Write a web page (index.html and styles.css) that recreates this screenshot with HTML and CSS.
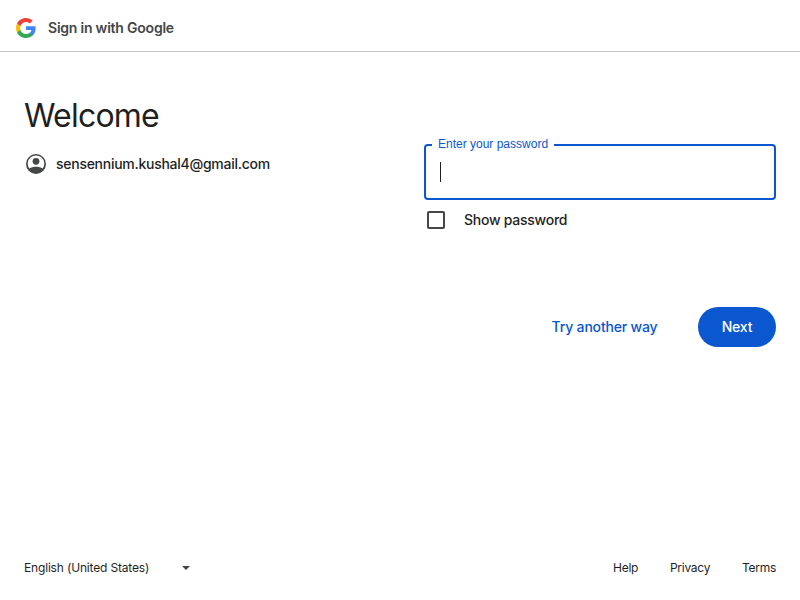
FILE: index.html
```html
<!DOCTYPE html>
<html lang="en">
<head>
<meta charset="utf-8">
<title>Sign in with Google</title>
<link rel="stylesheet" href="styles.css">
</head>
<body>
<div class="page">
  <header class="header">
    <svg class="logo" viewBox="2 2 44 44"><path fill="#4285F4" d="M45.12 24.5c0-1.56-.14-3.06-.4-4.5H24v8.51h11.84c-.51 2.75-2.06 5.08-4.39 6.64v5.52h7.11c4.16-3.83 6.56-9.47 6.56-16.17z"/><path fill="#34A853" d="M24 46c5.94 0 10.92-1.97 14.56-5.33l-7.11-5.52c-1.97 1.32-4.49 2.1-7.45 2.1-5.73 0-10.58-3.87-12.31-9.07H4.34v5.7C7.96 41.07 15.4 46 24 46z"/><path fill="#FBBC05" d="M11.69 28.18C11.25 26.86 11 25.45 11 24s.25-2.86.69-4.18v-5.7H4.34C2.85 17.09 2 20.45 2 24s.85 6.91 2.34 9.88l7.35-5.7z"/><path fill="#EA4335" d="M24 10.75c3.23 0 6.13 1.11 8.41 3.29l6.31-6.31C34.91 4.18 29.93 2 24 2 15.4 2 7.96 6.93 4.34 14.12l7.35 5.7c1.73-5.2 6.58-9.07 12.31-9.07z"/></svg>
    <span class="brand">Sign in with Google</span>
  </header>
  <main class="main">
    <section class="intro">
      <h1 class="title">Welcome</h1>
      <div class="account">
        <svg class="avatar" viewBox="0 0 24 24"><path fill="#444746" fill-rule="evenodd" d="M12 2a10 10 0 1 0 0 20 10 10 0 0 0 0-20zM5.3 16.6A8.3 8.3 0 1 1 18.7 16.6C16.9 15.4 14.5 14.8 12 14.8s-4.9.6-6.7 1.8z"/><circle fill="#444746" cx="12" cy="9.3" r="3.4"/></svg>
        <span class="email">sensennium.kushal4@gmail.com</span>
      </div>
    </section>
    <section class="form">
      <div class="field"><span class="label">Enter your password</span><span class="caret"></span></div>
      <div class="show"><span class="checkbox"></span><span class="show-text">Show password</span></div>
      <div class="actions"><span class="other">Try another way</span><span class="next">Next</span></div>
    </section>
  </main>
  <footer class="footer">
    <span class="language">English (United States)</span>
    <svg class="arrow" viewBox="0 0 8 4"><path fill="#444746" d="M0 0h8L4 4z"/></svg>
    <nav class="links"><span class="help">Help</span><span class="privacy">Privacy</span><span class="terms">Terms</span></nav>
  </footer>
</div>
</body>
</html>
```
FILE: styles.css
```css
* { box-sizing: border-box; }
body { margin: 0; background: #fff; color: #1f1f1f; font-family: Inter, sans-serif; }
.page { height: 600px; display: flex; flex-direction: column; }
.header { height: 52px; padding: 4px 16px 0; display: flex; align-items: center; gap: 12px; border-bottom: 1px solid #c4c7c5; }
.logo { width: 20px; height: 20px; }
.brand { font-size: 14px; font-weight: 600; color: #444746; letter-spacing: -.22px; white-space: nowrap; }
.main { flex: 1; display: grid; grid-template-columns: 352px 352px; column-gap: 48px; padding: 42px 24px 0; }
.title { margin: 0; font-size: 32px; line-height: 44px; font-weight: 420; letter-spacing: -.8px; }
.account { display: flex; align-items: center; gap: 8px; height: 32px; margin-top: 10px; }
.avatar { width: 24px; height: 24px; }
.email, .show-text, .other, .next { font-size: 14px; font-weight: 500; white-space: nowrap; }
.email { padding-bottom: 2px; letter-spacing: -.27px; }
.form { padding-top: 50px; }
.field { position: relative; height: 56px; border: 2px solid #0b57d0; border-radius: 4px; padding: 16px 14px; }
.label { position: absolute; left: 6px; top: -10px; padding: 0 6px; background: #fff; color: #0b57d0; font-family: "Liberation Sans", sans-serif; font-size: 12px; line-height: 16px; white-space: nowrap; }
.caret { display: block; width: 1px; height: 20px; background: #1f1f1f; }
.show { display: flex; align-items: center; height: 40px; padding-left: 3px; gap: 19px; }
.show-text { padding-bottom: 2px; letter-spacing: -.25px; }
.checkbox { width: 18px; height: 18px; border: 2px solid #444746; border-radius: 2px; }
.actions { display: flex; justify-content: flex-end; align-items: center; gap: 40.6px; margin-top: 67px; color: #0b57d0; }
.other { padding-bottom: 2px; letter-spacing: -.18px; }
.next { width: 78px; height: 40px; padding-bottom: 2px; border-radius: 20px; background: #0b57d0; color: #fff; letter-spacing: -.2px; display: flex; align-items: center; justify-content: center; }
.footer { height: 64px; padding: 0 24px; display: flex; align-items: center; font-size: 12px; letter-spacing: -.17px; }
.language { width: 158px; padding-bottom: 2px; white-space: nowrap; }
.arrow { width: 8px; height: 4px; }
.links { margin-left: auto; padding-bottom: 2px; display: flex; gap: 31.7px; letter-spacing: -.25px; }
```
